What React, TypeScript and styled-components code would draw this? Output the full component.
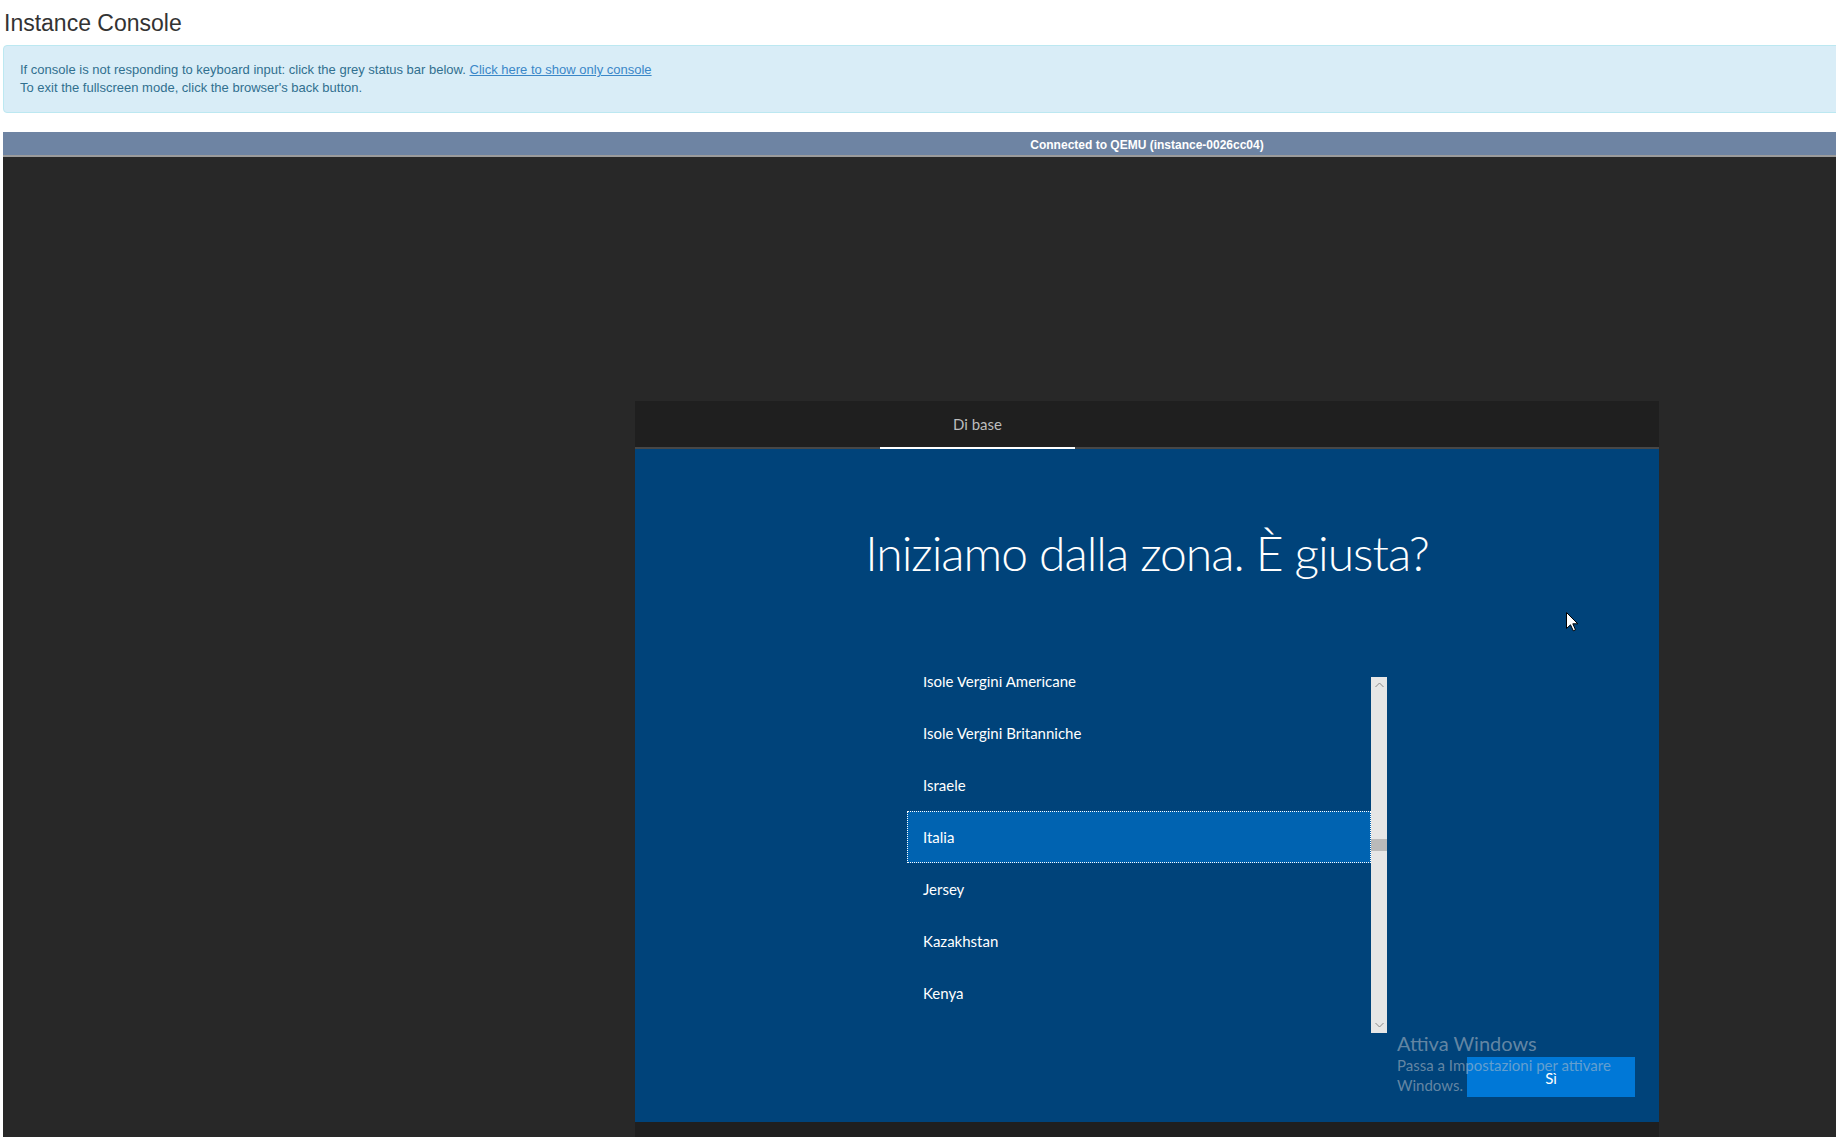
import React from 'react';
import styled, { createGlobalStyle } from 'styled-components';

const GlobalStyle = createGlobalStyle`
    html, body {
        margin: 0;
        padding: 0;
        overflow: hidden;
        background: #fff;
    }
    body {
        font-family: "Liberation Sans", Arial, sans-serif;
    }
`;

const Page = styled.div`
    width: 2288px;
    padding-left: 3px;
`;

const Title = styled.h1`
    margin: 11px 0 9px 1px;
    font-size: 23px;
    line-height: 25px;
    font-weight: 400;
    color: #333;
`;

const Alert = styled.div`
    padding: 15px 15px 15px 16px;
    margin-bottom: 19px;
    border: 1px solid #bce8f1;
    border-radius: 4px;
    background: #d9edf7;
    color: #31708f;
    font-size: 13px;
    line-height: 18px;
`;

const AlertLink = styled.a`
    color: #3a87c8;
    text-decoration: underline;
    cursor: pointer;
`;

const StatusBar = styled.div`
    height: 25px;
    box-sizing: border-box;
    padding-top: 4px;
    background: #6e84a3;
    border-bottom: 2px solid #9b9b9b;
    color: #fff;
    font-size: 12px;
    font-weight: 700;
    line-height: 19px;
    text-align: center;
`;

const ConsoleArea = styled.div`
    background: #282828;
    padding-top: 244px;
    height: 1100px;
`;

const VmScreen = styled.div`
    width: 1024px;
    height: 768px;
    margin: 0 auto;
    display: flex;
    flex-direction: column;
    font-family: "Segoe UI", Lato, "Open Sans", sans-serif;
`;

const OobeHeader = styled.div`
    height: 46px;
    background: #1f1f1f;
    border-bottom: 2px solid #474747;
    display: flex;
`;

const Tab = styled.div`
    margin-left: 245px;
    width: 195px;
    margin-bottom: -2px;
    border-bottom: 2px solid #fff;
    color: #bdbdbd;
    font-size: 15px;
    text-align: center;
    line-height: 46px;
`;

const OobeBody = styled.div`
    position: relative;
    flex: 1;
    background: #00437a;
    display: flex;
    flex-direction: column;
    padding-top: 68px;
`;

const Heading = styled.h2`
    margin: 0;
    font-size: 48px;
    letter-spacing: -1px;
    line-height: 72px;
    font-weight: 300;
    color: #fff;
    text-align: center;
`;

const ListBox = styled.div`
    margin: 88px 0 0 272px;
    width: 480px;
    height: 356px;
    display: flex;
`;

const ListViewport = styled.div`
    flex: 1;
    overflow: hidden;
`;

const ListInner = styled.ul<{ $scroll: number }>`
    list-style: none;
    margin: ${(p) => -p.$scroll}px 0 0;
    padding: 0;
`;

const Item = styled.li<{ $selected?: boolean }>`
    height: 52px;
    box-sizing: border-box;
    padding-left: 15px;
    font-size: 15px;
    line-height: 50px;
    color: #fff;
    border: 1px ${(p) => (p.$selected ? 'dotted #fff' : 'solid transparent')};
    background: ${(p) => (p.$selected ? '#0063b1' : 'transparent')};
`;

const ScrollTrack = styled.div`
    width: 16px;
    background: #e6e6e6;
    display: flex;
    flex-direction: column;
    align-items: center;
`;

const ScrollArrow = styled.div`
    height: 16px;
    width: 16px;
    display: flex;
    align-items: center;
    justify-content: center;
`;

const ScrollRail = styled.div`
    flex: 1;
    width: 100%;
`;

const Thumb = styled.div<{ $top: number }>`
    margin-top: ${(p) => p.$top}px;
    height: 12px;
    background: #bababa;
`;

const ButtonRow = styled.div`
    margin-top: 24px;
    display: flex;
    justify-content: flex-end;
    padding-right: 24px;
`;

const YesButton = styled.button`
    width: 168px;
    height: 40px;
    border: none;
    background: #0078d7;
    color: #fff;
    font-family: inherit;
    font-size: 15px;
    padding: 2px 0 0;
`;

const Watermark = styled.div`
    position: absolute;
    left: 762px;
    top: 581px;
    color: rgba(185, 192, 200, 0.55);
    pointer-events: none;
`;

const WatermarkTitle = styled.div`
    font-size: 20px;
    line-height: 26px;
`;

const WatermarkText = styled.div`
    font-size: 15px;
    line-height: 19.5px;
    width: 240px;
`;

const Cursor = styled.svg`
    position: absolute;
    left: 931px;
    top: 163px;
`;

const OobeFooter = styled.div`
    height: 47px;
    background: #1f1f1f;
`;

const countries = [
    'Isole Vergini Americane',
    'Isole Vergini Britanniche',
    'Israele',
    'Italia',
    'Jersey',
    'Kazakhstan',
    'Kenya',
    'Kirghizistan',
];

const Chevron = ({ up }: { up?: boolean }) => (
    <svg width="9" height="6" viewBox="0 0 9 6">
        <polyline
            points={up ? '0.5,5 4.5,1 8.5,5' : '0.5,1 4.5,5 8.5,1'}
            fill="none"
            stroke="#8a8a8a"
            strokeWidth="1"
        />
    </svg>
);

const App = () => {
    return (
        <Page>
            <GlobalStyle />
            <Title>Instance Console</Title>
            <Alert>
                If console is not responding to keyboard input: click the grey status bar below.{' '}
                <AlertLink>Click here to show only console</AlertLink>
                <br />
                To exit the fullscreen mode, click the browser's back button.
            </Alert>
            <StatusBar>Connected to QEMU (instance-0026cc04)</StatusBar>
            <ConsoleArea>
                <VmScreen>
                    <OobeHeader>
                        <Tab>Di base</Tab>
                    </OobeHeader>
                    <OobeBody>
                        <Heading>Iniziamo dalla zona. È giusta?</Heading>
                        <ListBox>
                            <ListViewport>
                                <ListInner $scroll={22}>
                                    {countries.map((c) => (
                                        <Item key={c} $selected={c === 'Italia'}>
                                            {c}
                                        </Item>
                                    ))}
                                </ListInner>
                            </ListViewport>
                            <ScrollTrack>
                                <ScrollArrow>
                                    <Chevron up />
                                </ScrollArrow>
                                <ScrollRail>
                                    <Thumb $top={146} />
                                </ScrollRail>
                                <ScrollArrow>
                                    <Chevron />
                                </ScrollArrow>
                            </ScrollTrack>
                        </ListBox>
                        <ButtonRow>
                            <YesButton>Sì</YesButton>
                        </ButtonRow>
                        <Watermark>
                            <WatermarkTitle>Attiva Windows</WatermarkTitle>
                            <WatermarkText>Passa a Impostazioni per attivare Windows.</WatermarkText>
                        </Watermark>
                        <Cursor width="13" height="20" viewBox="0 0 13 20">
                            <path
                                d="M0.5 0.5 V16.5 L4.5 12.8 L7.3 18.8 L9.5 17.8 L6.8 11.8 H11.8 Z"
                                fill="#fff"
                                stroke="#000"
                                strokeWidth="1"
                            />
                        </Cursor>
                    </OobeBody>
                    <OobeFooter />
                </VmScreen>
            </ConsoleArea>
        </Page>
    );
};

export default App;
